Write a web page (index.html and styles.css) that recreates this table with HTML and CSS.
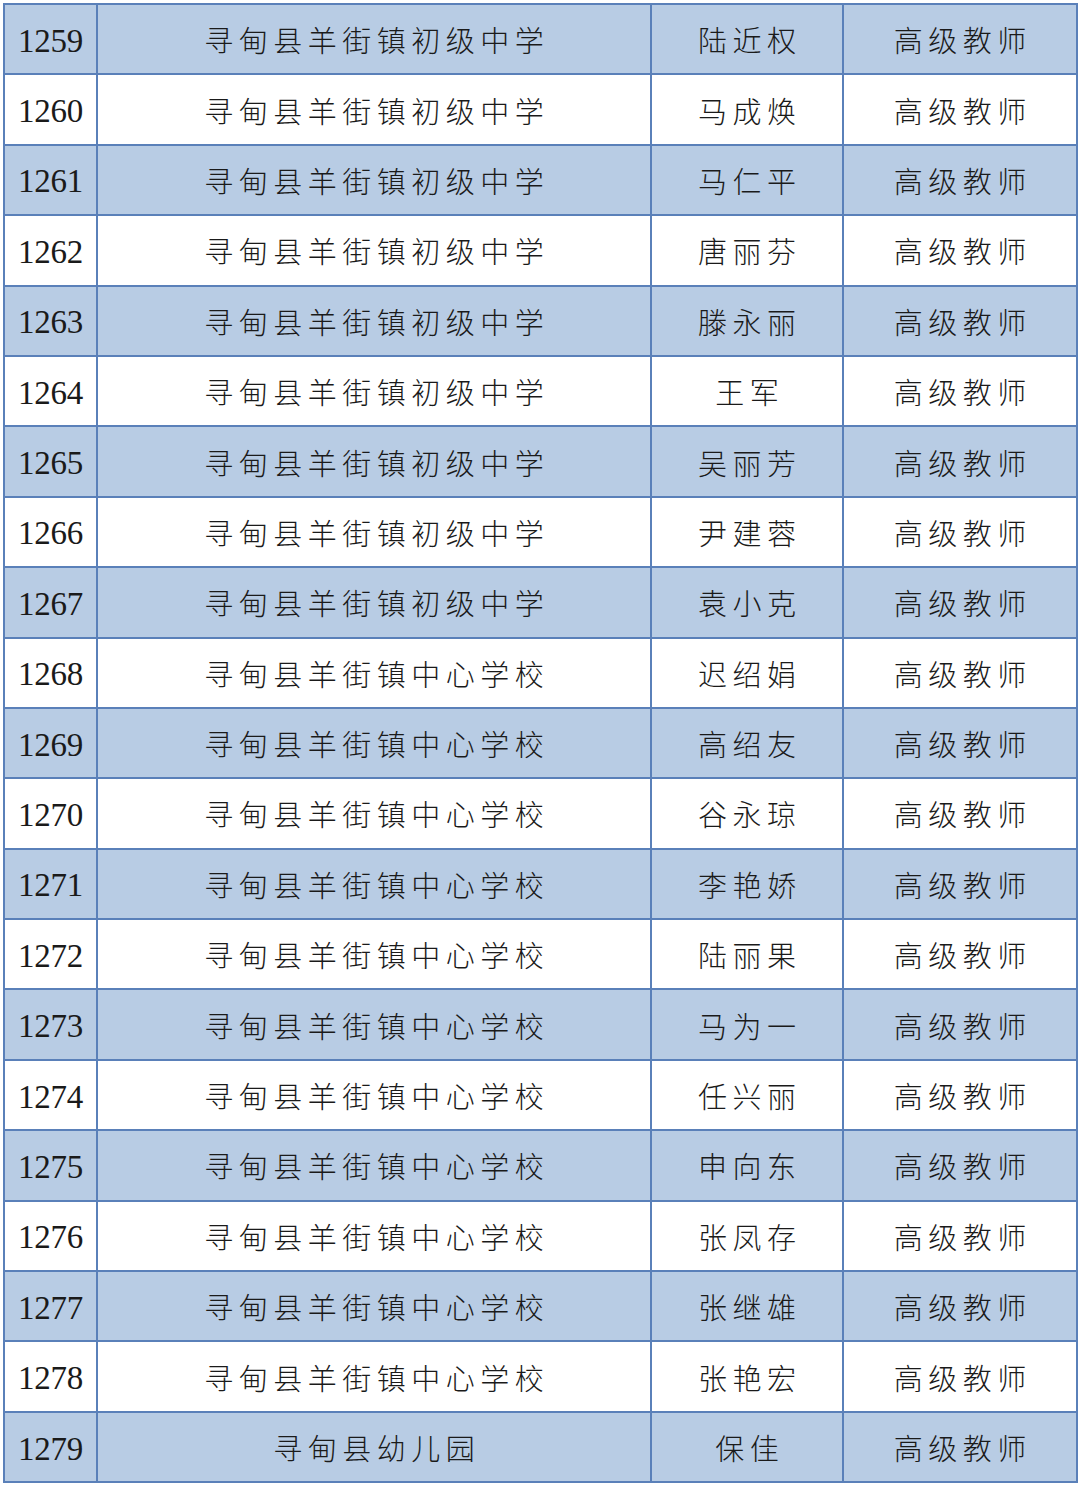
FILE: index.html
```html
<!DOCTYPE html>
<html lang="zh">
<head>
<meta charset="utf-8">
<title>名单</title>
<link rel="stylesheet" href="styles.css">
</head>
<body>
<table class="list">
<colgroup><col class="c1"><col class="c2"><col class="c3"><col class="c4"></colgroup>
<tbody>
<tr class="blue"><td class="num">1259</td><td class="zh">寻甸县羊街镇初级中学</td><td class="zh">陆近权</td><td class="zh">高级教师</td></tr>
<tr><td class="num">1260</td><td class="zh">寻甸县羊街镇初级中学</td><td class="zh">马成焕</td><td class="zh">高级教师</td></tr>
<tr class="blue"><td class="num">1261</td><td class="zh">寻甸县羊街镇初级中学</td><td class="zh">马仁平</td><td class="zh">高级教师</td></tr>
<tr><td class="num">1262</td><td class="zh">寻甸县羊街镇初级中学</td><td class="zh">唐丽芬</td><td class="zh">高级教师</td></tr>
<tr class="blue"><td class="num">1263</td><td class="zh">寻甸县羊街镇初级中学</td><td class="zh">滕永丽</td><td class="zh">高级教师</td></tr>
<tr><td class="num">1264</td><td class="zh">寻甸县羊街镇初级中学</td><td class="zh">王军</td><td class="zh">高级教师</td></tr>
<tr class="blue"><td class="num">1265</td><td class="zh">寻甸县羊街镇初级中学</td><td class="zh">吴丽芳</td><td class="zh">高级教师</td></tr>
<tr><td class="num">1266</td><td class="zh">寻甸县羊街镇初级中学</td><td class="zh">尹建蓉</td><td class="zh">高级教师</td></tr>
<tr class="blue"><td class="num">1267</td><td class="zh">寻甸县羊街镇初级中学</td><td class="zh">袁小克</td><td class="zh">高级教师</td></tr>
<tr><td class="num">1268</td><td class="zh">寻甸县羊街镇中心学校</td><td class="zh">迟绍娟</td><td class="zh">高级教师</td></tr>
<tr class="blue"><td class="num">1269</td><td class="zh">寻甸县羊街镇中心学校</td><td class="zh">高绍友</td><td class="zh">高级教师</td></tr>
<tr><td class="num">1270</td><td class="zh">寻甸县羊街镇中心学校</td><td class="zh">谷永琼</td><td class="zh">高级教师</td></tr>
<tr class="blue"><td class="num">1271</td><td class="zh">寻甸县羊街镇中心学校</td><td class="zh">李艳娇</td><td class="zh">高级教师</td></tr>
<tr><td class="num">1272</td><td class="zh">寻甸县羊街镇中心学校</td><td class="zh">陆丽果</td><td class="zh">高级教师</td></tr>
<tr class="blue"><td class="num">1273</td><td class="zh">寻甸县羊街镇中心学校</td><td class="zh">马为一</td><td class="zh">高级教师</td></tr>
<tr><td class="num">1274</td><td class="zh">寻甸县羊街镇中心学校</td><td class="zh">任兴丽</td><td class="zh">高级教师</td></tr>
<tr class="blue"><td class="num">1275</td><td class="zh">寻甸县羊街镇中心学校</td><td class="zh">申向东</td><td class="zh">高级教师</td></tr>
<tr><td class="num">1276</td><td class="zh">寻甸县羊街镇中心学校</td><td class="zh">张凤存</td><td class="zh">高级教师</td></tr>
<tr class="blue"><td class="num">1277</td><td class="zh">寻甸县羊街镇中心学校</td><td class="zh">张继雄</td><td class="zh">高级教师</td></tr>
<tr><td class="num">1278</td><td class="zh">寻甸县羊街镇中心学校</td><td class="zh">张艳宏</td><td class="zh">高级教师</td></tr>
<tr class="blue"><td class="num">1279</td><td class="zh">寻甸县幼儿园</td><td class="zh">保佳</td><td class="zh">高级教师</td></tr>
</tbody>
</table>
</body>
</html>
```
FILE: styles.css
```css
html, body {
  margin: 0;
  padding: 0;
  background: #ffffff;
}
body {
  padding: 3px 0 0 3px;
}
.list {
  border-collapse: collapse;
  table-layout: fixed;
  width: 1073px;
}
.c1 { width: 93px; }
.c2 { width: 554px; }
.c3 { width: 192px; }
.c4 { width: 234px; }
.list td {
  border: 2px solid #5a80b9;
  height: 68.4px;
  padding: 0;
  text-align: center;
  vertical-align: middle;
  color: #1a1a1a;
  white-space: nowrap;
}
.list tr.blue td {
  background: #b8cce4;
}
.list td.num {
  font-family: "Liberation Serif", serif;
  font-size: 33px;
  letter-spacing: -0.3px;
  height: 64.4px;
  padding-top: 4px;
}
.zh {
  font-family: "Noto Sans CJK SC", sans-serif;
  font-weight: 300;
  font-size: 29px;
  letter-spacing: 5.5px;
  text-indent: 5.5px;
}
```
